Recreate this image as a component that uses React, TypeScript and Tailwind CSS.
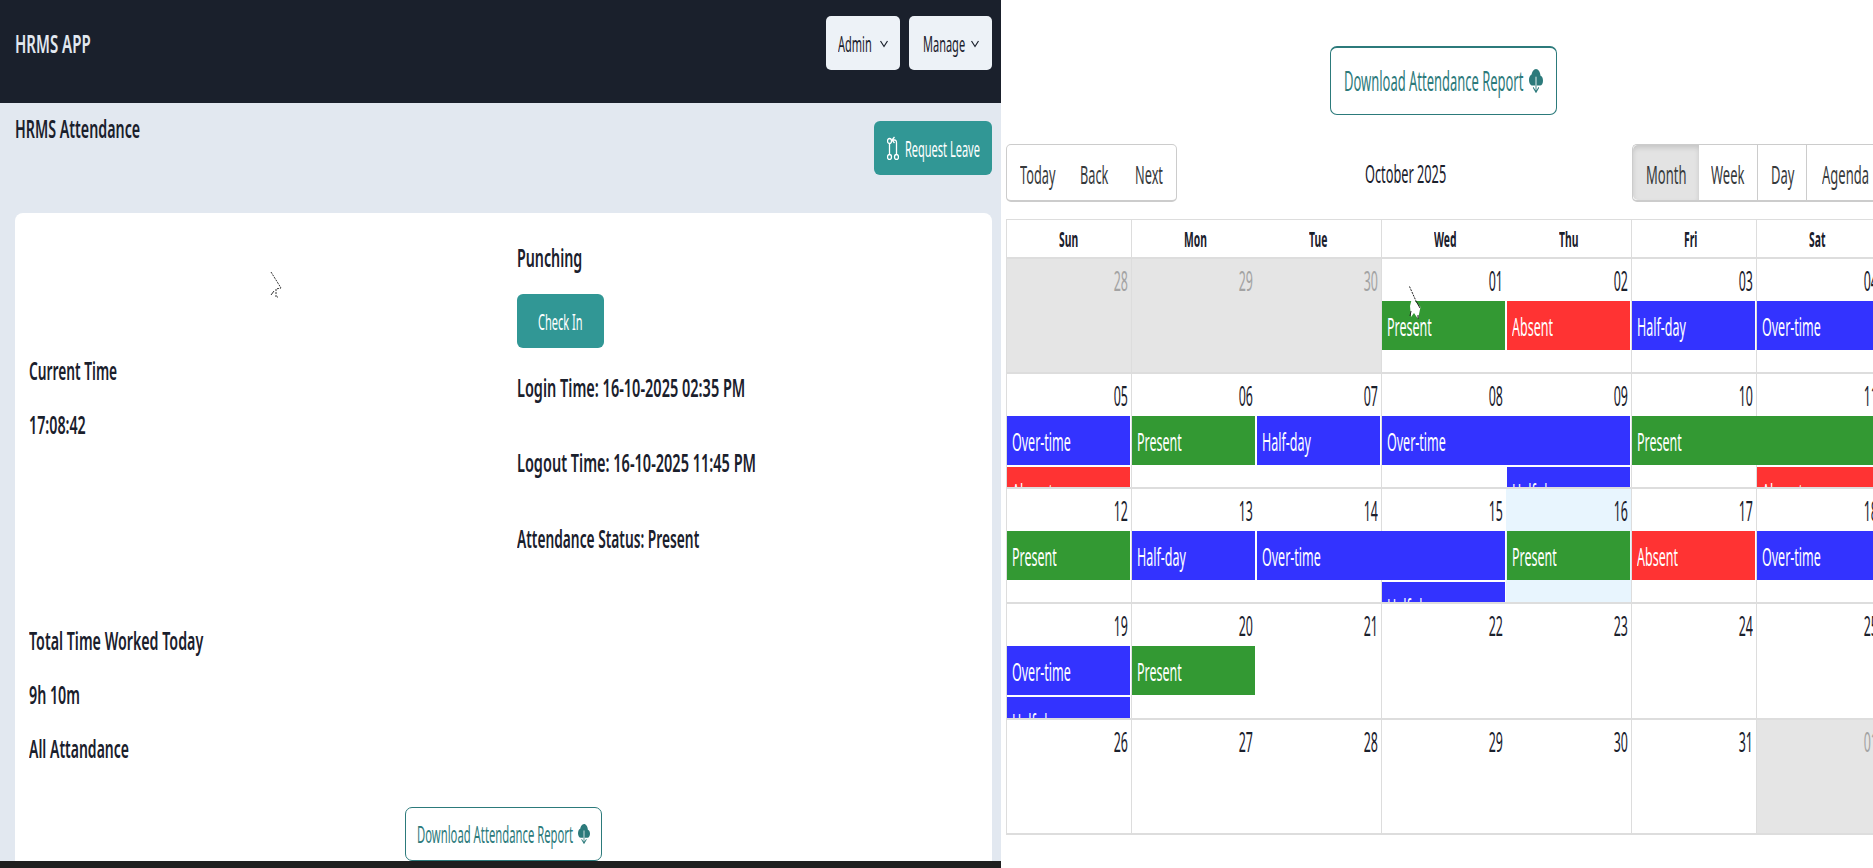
import React from "react";

const FONT = "font-['Noto_Sans',sans-serif]";

function L({ className = "", children }: { className?: string; children: React.ReactNode }) {
  return <span className={`inline-block origin-left whitespace-nowrap ${className}`}>{children}</span>;
}

function Box({ box, className = "", children }: { box: string; className?: string; children: React.ReactNode }) {
  return (
    <span className={`block shrink-0 ${box}`}>
      <L className={className}>{children}</L>
    </span>
  );
}

function Line({
  children,
  className = "h-[54px]",
  scale = "scale-x-[0.57]",
}: {
  children: React.ReactNode;
  className?: string;
  scale?: string;
}) {
  return (
    <div className={`flex items-center ${className}`}>
      <L className={`${scale} text-[25px] font-semibold text-[#1a202c]`}>{children}</L>
    </div>
  );
}

function CloudDown({ className }: { className: string }) {
  return (
    <svg className={className} viewBox="0 0 16 16" preserveAspectRatio="none" fill="currentColor">
      <path d="M8 0a5.53 5.53 0 0 0-3.594 1.342c-.766.66-1.321 1.52-1.464 2.383C1.266 4.095 0 5.555 0 7.318 0 9.366 1.708 11 3.781 11H7.5V5.5a.5.5 0 0 1 1 0V11h4.188C14.502 11 16 9.57 16 7.773c0-1.636-1.242-2.969-2.834-3.194C12.923 1.999 10.69 0 8 0m-.354 15.854a.5.5 0 0 0 .708 0l3-3a.5.5 0 0 0-.708-.708L8.5 14.293V11h-1v3.293l-2.146-2.147a.5.5 0 0 0-.708.708z" />
    </svg>
  );
}

function Chevron() {
  return (
    <svg className="h-[9px] w-[8px] shrink-0 text-[#1a202c]" viewBox="0 0 16 18" preserveAspectRatio="none" fill="none">
      <path d="M1 4 L8 15 L15 4" stroke="currentColor" strokeWidth="2.4" />
    </svg>
  );
}

function PullIcon() {
  return (
    <svg className="h-[24px] w-[12px] shrink-0 text-white" viewBox="0 0 24 24" preserveAspectRatio="none" fill="none">
      <g stroke="currentColor" strokeWidth="1.3">
        <ellipse cx="5" cy="5" rx="4" ry="2.5" vectorEffect="non-scaling-stroke" />
        <ellipse cx="5" cy="21" rx="4" ry="2.5" vectorEffect="non-scaling-stroke" />
        <ellipse cx="19" cy="21" rx="4" ry="2.5" vectorEffect="non-scaling-stroke" />
        <path d="M5 7.5 V18.5" vectorEffect="non-scaling-stroke" />
        <path d="M19 18.5 V7 Q19 4 15 4 H11 M15 1 L10 4 L15 7" vectorEffect="non-scaling-stroke" />
      </g>
    </svg>
  );
}

function DownloadButton({ big }: { big?: boolean }) {
  return (
    <button
      className={
        big
          ? "flex h-[69px] w-[227px] items-center justify-center gap-[5px] rounded-[7px] border border-t-2 border-[#2c7a7b] bg-white"
          : "flex h-[54px] w-[197px] items-center justify-center gap-[5px] rounded-[7px] border border-[#2c7a7b] bg-white"
      }
    >
      <Box
        box={big ? "w-[180px]" : "w-[156px]"}
        className={big ? "scale-x-[0.48] text-[27px] text-[#2c7a7b]" : "scale-x-[0.47] text-[24px] text-[#2c7a7b]"}
      >
        Download Attendance Report
      </Box>
      <CloudDown className={big ? "h-[24px] w-[14px] shrink-0 text-[#2c7a7b]" : "h-[20px] w-[12px] shrink-0 text-[#2c7a7b]"} />
    </button>
  );
}

function OutlineCursor({ className }: { className: string }) {
  return (
    <svg className={className} viewBox="0 0 13 27" fill="none">
      <path d="M1 1 L11 17 L6 18 L6 26 L8 26" stroke="#333" strokeWidth="1" strokeDasharray="2 1" />
      <path d="M1 24 L4 20" stroke="#333" strokeWidth="1" />
    </svg>
  );
}

function SolidCursor({ className }: { className: string }) {
  return (
    <svg className={className} viewBox="0 0 13 36" fill="none">
      <path d="M3 12 L11.5 21 L9 33 L5 27 L2 31 L1 20 Z" fill="#ffffff" />
      <path d="M0.5 0.5 L7 15" stroke="#222" strokeWidth="1" strokeDasharray="2 1" />
      <path d="M7 15 L11 22" stroke="#222" strokeWidth="1" />
      <path d="M1 30 L2 25 M9 33 L9 29" stroke="#222" strokeWidth="1" />
    </svg>
  );
}

type Ev = { label: string; color: string; col: number; span?: number; row: number };
const G = "bg-[#339933]";
const R = "bg-[#ff3333]";
const B = "bg-[#3333ff]";

const weeks: { days: string[]; off: number[]; today?: number; tall?: boolean; events: Ev[] }[] = [
  {
    days: ["28", "29", "30", "01", "02", "03", "04"],
    off: [0, 1, 2],
    events: [
      { label: "Present", color: G, col: 3, row: 2 },
      { label: "Absent", color: R, col: 4, row: 2 },
      { label: "Half-day", color: B, col: 5, row: 2 },
      { label: "Over-time", color: B, col: 6, row: 2 },
    ],
  },
  {
    days: ["05", "06", "07", "08", "09", "10", "11"],
    off: [],
    events: [
      { label: "Over-time", color: B, col: 0, row: 2 },
      { label: "Present", color: G, col: 1, row: 2 },
      { label: "Half-day", color: B, col: 2, row: 2 },
      { label: "Over-time", color: B, col: 3, span: 2, row: 2 },
      { label: "Present", color: G, col: 5, span: 2, row: 2 },
      { label: "Absent", color: R, col: 0, row: 3 },
      { label: "Half-day", color: B, col: 4, row: 3 },
      { label: "Absent", color: R, col: 6, row: 3 },
    ],
  },
  {
    days: ["12", "13", "14", "15", "16", "17", "18"],
    off: [],
    today: 4,
    events: [
      { label: "Present", color: G, col: 0, row: 2 },
      { label: "Half-day", color: B, col: 1, row: 2 },
      { label: "Over-time", color: B, col: 2, span: 2, row: 2 },
      { label: "Present", color: G, col: 4, row: 2 },
      { label: "Absent", color: R, col: 5, row: 2 },
      { label: "Over-time", color: B, col: 6, row: 2 },
      { label: "Half-day", color: B, col: 3, row: 3 },
    ],
  },
  {
    days: ["19", "20", "21", "22", "23", "24", "25"],
    off: [],
    tall: true,
    events: [
      { label: "Over-time", color: B, col: 0, row: 2 },
      { label: "Present", color: G, col: 1, row: 2 },
      { label: "Half-day", color: B, col: 0, row: 3 },
    ],
  },
  {
    days: ["26", "27", "28", "29", "30", "31", "01"],
    off: [6],
    events: [],
  },
];

const noLine = [2, 4];

function Week({ w }: { w: (typeof weeks)[number] }) {
  return (
    <div
      className={`grid grid-cols-[repeat(7,125px)] grid-rows-[42px_50px_1fr] overflow-hidden border-b-2 border-[#dddddd] ${w.tall ? "h-[116px]" : "h-[115px]"}`}
    >
      {w.days.map((d, i) => {
        const off = w.off.includes(i);
        const today = w.today === i;
        return (
          <React.Fragment key={i}>
            <div
              style={{ gridColumn: i + 1 }}
              className={`row-span-3 row-start-1 ${noLine.includes(i) ? "" : "border-l border-[#dddddd]"} ${off ? "bg-[#e5e5e5]" : today ? "bg-[#e8f5fe]" : ""}`}
            />
            <div style={{ gridColumn: i + 1 }} className="row-start-1 pr-[3px] pt-[5px] text-right leading-[34px]">
              <span className={`inline-block origin-right scale-x-[0.46] text-[27px] ${off ? "text-[#a3a3a3]" : "text-[#1a202c]"}`}>
                {d}
              </span>
            </div>
          </React.Fragment>
        );
      })}
      {w.events.map((e, i) => (
        <div
          key={i}
          style={{ gridColumn: `${e.col + 1} / span ${e.span ?? 1}`, gridRow: e.row }}
          className={`mx-px overflow-hidden pl-[5px] leading-[50px] ${e.color} ${e.row === 3 ? "mt-px" : "h-[49px]"}`}
        >
          <L className="scale-x-[0.5] text-[25px] text-white">{e.label}</L>
        </div>
      ))}
    </div>
  );
}

export default function App() {
  return (
    <div className={`flex h-[868px] w-[1873px] overflow-hidden bg-white ${FONT}`}>
      <div className="flex h-[868px] w-[1001px] shrink-0 flex-col bg-[#e2e8f0]">
        <header className="flex h-[103px] shrink-0 justify-between bg-[#1a202c] pl-[15px] pr-[9px] pt-4">
          <div className="flex h-[56px] items-center">
            <L className="scale-x-[0.6] text-[25px] font-semibold text-[#e2e8f0]">HRMS APP</L>
          </div>
          <div className="flex gap-[9px]">
            <button className="flex h-[54px] w-[74px] items-center justify-center gap-[7px] rounded-[5px] bg-[#edf2f7]">
              <Box box="w-[35px]" className="scale-x-[0.5] text-[22px] text-[#1a202c]">Admin</Box>
              <Chevron />
            </button>
            <button className="flex h-[54px] w-[83px] items-center justify-center gap-[6px] rounded-[5px] bg-[#edf2f7]">
              <Box box="w-[42px]" className="scale-x-[0.5] text-[22px] text-[#1a202c]">Manage</Box>
              <Chevron />
            </button>
          </div>
        </header>
        <div className="flex h-[110px] shrink-0 justify-between pl-[15px] pr-[9px] pt-[18px]">
          <div className="flex h-[16px] items-center">
            <L className="scale-x-[0.57] text-[25px] font-semibold text-[#1a202c]">HRMS Attendance</L>
          </div>
          <button className="flex h-[54px] w-[118px] items-center justify-center gap-[6px] rounded-[6px] bg-[#319795]">
            <PullIcon />
            <Box box="w-[75px]" className="scale-x-[0.5] text-[22px] text-white">Request Leave</Box>
          </button>
        </div>
        <main className="relative ml-[15px] mr-[9px] flex-1 rounded-t-lg bg-white">
          <div className="grid h-[594px] grid-cols-[488px_1fr] pl-[14px]">
            <div className="pt-[131px]">
              <Line scale="scale-x-[0.55]">Current Time</Line>
              <Line>17:08:42</Line>
              <div className="h-[162px]" />
              <Line>Total Time Worked Today</Line>
              <Line>9h 10m</Line>
              <Line scale="scale-x-[0.56]">All Attandance</Line>
            </div>
            <div className="pt-[18px]">
              <Line>Punching</Line>
              <button className="mt-[9px] flex h-[54px] w-[87px] items-center justify-center rounded-[6px] bg-[#319795]">
                <Box box="w-[45px]" className="scale-x-[0.5] text-[22px] text-white">Check In</Box>
              </button>
              <Line className="mt-[13px] h-[54px]" scale="scale-x-[0.58]">Login Time: 16-10-2025 02:35 PM</Line>
              <Line className="mt-[21px] h-[54px]" scale="scale-x-[0.58]">Logout Time: 16-10-2025 11:45 PM</Line>
              <Line className="mt-[22px] h-[54px]" scale="scale-x-[0.55]">Attendance Status: Present</Line>
            </div>
          </div>
          <div className="flex justify-center pr-[1px]">
            <DownloadButton />
          </div>
          <OutlineCursor className="absolute left-[255px] top-[58px] h-[27px] w-[13px]" />
        </main>
        <div className="h-[7px] shrink-0 bg-[#1f1f1f]" />
      </div>

      <div className="relative h-[868px] flex-1 overflow-hidden bg-white pl-[5px]">
        <div className="w-[880px]">
          <div className="flex h-[144px] justify-center pr-[6px] pt-[46px]">
            <DownloadButton big />
          </div>
          <div className="flex h-[75px] items-start">
            <div className="flex h-[58px] w-[171px] shrink-0 items-center rounded-[5px] border border-b-2 border-[#cccccc] pl-[13px] pt-[4px]">
              <Box box="w-[60px]" className="scale-x-[0.51] text-[25px] text-[#373a3c]">Today</Box>
              <Box box="w-[55px]" className="scale-x-[0.51] text-[25px] text-[#373a3c]">Back</Box>
              <Box box="w-[30px]" className="scale-x-[0.51] text-[25px] text-[#373a3c]">Next</Box>
            </div>
            <div className="flex h-[58px] w-[455px] shrink-0 items-center justify-center pt-[2px]">
              <Box box="w-[80px]" className="scale-x-[0.51] text-[25px] text-[#1a202c]">October 2025</Box>
            </div>
            <div className="flex h-[58px] shrink-0 rounded-l-[5px] border border-b-2 border-r-0 border-[#cccccc]">
              <div className="flex w-[66px] items-center justify-center rounded-l-[5px] bg-[#e3e3e3] pt-[4px] shadow-[inset_0_3px_5px_rgba(0,0,0,0.125)]">
                <Box box="w-[40px]" className="scale-x-[0.52] text-[25px] text-[#373a3c]">Month</Box>
              </div>
              <div className="flex w-[59px] items-center justify-center border-r border-[#cccccc] pt-[4px]">
                <Box box="w-[34px]" className="scale-x-[0.52] text-[25px] text-[#373a3c]">Week</Box>
              </div>
              <div className="flex w-[49px] items-center justify-center border-r border-[#cccccc] pt-[4px]">
                <Box box="w-[23px]" className="scale-x-[0.52] text-[25px] text-[#373a3c]">Day</Box>
              </div>
              <div className="flex w-[76px] items-center justify-center pt-[4px]">
                <Box box="w-[46px]" className="scale-x-[0.52] text-[25px] text-[#373a3c]">Agenda</Box>
              </div>
            </div>
          </div>
          <div>
            <div className="grid h-[40px] grid-cols-[repeat(7,125px)] border-y border-b-2 border-[#dddddd]">
              {["Sun", "Mon", "Tue", "Wed", "Thu", "Fri", "Sat"].map((d, i) => (
                <div
                  key={d}
                  className={`flex items-center justify-center ${noLine.includes(i) ? "" : "border-l border-[#dddddd]"}`}
                >
                  <Box box="w-[20px]" className="scale-x-[0.47] text-[22px] font-bold text-[#1a202c]">{d}</Box>
                </div>
              ))}
            </div>
            {weeks.map((w, i) => (
              <Week key={i} w={w} />
            ))}
          </div>
        </div>
        <SolidCursor className="absolute left-[408px] top-[286px] h-[36px] w-[13px]" />
      </div>
    </div>
  );
}
